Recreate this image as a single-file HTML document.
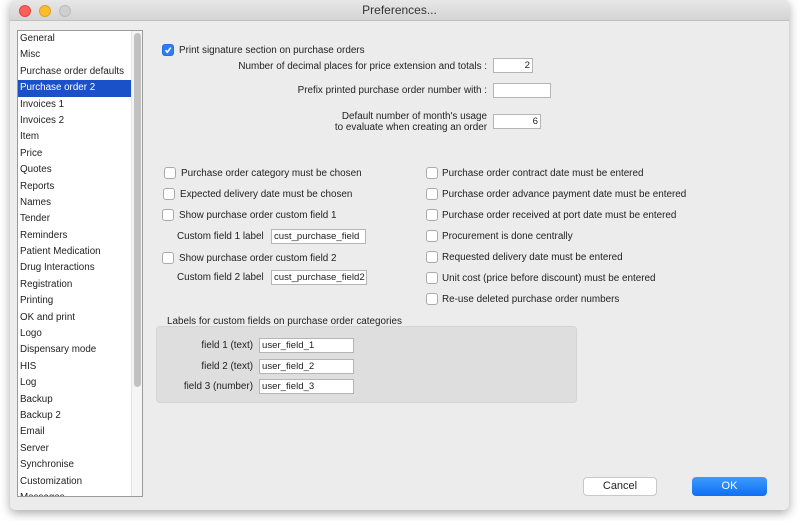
<!DOCTYPE html>
<html><head><meta charset="utf-8"><style>
*{margin:0;padding:0;box-sizing:border-box}
body{width:800px;height:521px;background:#fff;position:relative;overflow:hidden;font-family:"Liberation Sans",sans-serif;font-size:9.9px;color:#222}
.win{position:absolute;left:10px;top:0;width:779px;height:510px;background:#ececec;border-radius:5px;box-shadow:0 3px 10px rgba(0,0,0,.35);overflow:hidden}
.tb{position:absolute;left:0;top:0;width:100%;height:21px;background:linear-gradient(#e8e8e8,#d4d4d4);border-bottom:1px solid #c0c0c0;text-align:center;font-size:12px;line-height:21px;color:#333}
.dot{position:absolute;top:5px;width:12px;height:12px;border-radius:50%}
.a{position:absolute;white-space:nowrap}
.list{position:absolute;left:7px;top:30px;width:126px;height:467px;background:#fff;border:1px solid #9a9a9a;overflow:hidden}
.it{height:16.4px;line-height:16.4px;padding-left:2px;font-size:9.8px}
.sel{background:#1a50c8;color:#fff}
.sb{position:absolute;left:113px;top:0;width:12px;height:466px;background:#f5f5f5;border-left:1px solid #e4e4e4}
.th{position:absolute;left:2px;top:2px;width:7px;height:354px;background:#c1c1c1;border-radius:4px}
.cb{position:absolute;width:12px;height:12px;background:#fff;border:1px solid #aaa;border-radius:3px}
.in{position:absolute;background:#fff;border:1px solid #b5b5b5;height:15px;line-height:13px;padding:0 2px;font-size:9.6px;overflow:hidden;white-space:nowrap}
.r{text-align:right}
</style></head><body>
<div class="win">
<div class="tb">Preferences...</div>
<div class="dot" style="left:9px;background:#fc5f57;border:1px solid #e0443e"></div>
<div class="dot" style="left:29px;background:#fdbc2e;border:1px solid #dea123"></div>
<div class="dot" style="left:49px;background:#cfcfcf;border:1px solid #bbb"></div>
<div class="list">
<div class="it">General</div><div class="it">Misc</div><div class="it">Purchase order defaults</div><div class="it sel">Purchase order 2</div><div class="it">Invoices 1</div><div class="it">Invoices 2</div><div class="it">Item</div><div class="it">Price</div><div class="it">Quotes</div><div class="it">Reports</div><div class="it">Names</div><div class="it">Tender</div><div class="it">Reminders</div><div class="it">Patient Medication</div><div class="it">Drug Interactions</div><div class="it">Registration</div><div class="it">Printing</div><div class="it">OK and print</div><div class="it">Logo</div><div class="it">Dispensary mode</div><div class="it">HIS</div><div class="it">Log</div><div class="it">Backup</div><div class="it">Backup 2</div><div class="it">Email</div><div class="it">Server</div><div class="it">Synchronise</div><div class="it">Customization</div><div class="it">Messages</div>
<div class="sb"><div class="th"></div></div>
</div>

<div class="cb" style="left:152px;top:44px;background:#2f7cf6;border-color:#2a6fd8"><svg width="10" height="10" style="position:absolute;left:0;top:0"><path d="M2.5 5.2 L4.3 7.2 L7.8 2.6" stroke="#fff" stroke-width="1.6" fill="none"/></svg></div>
<div class="a" style="left:169px;top:45px">Print signature section on purchase orders</div>
<div class="a r" style="right:302px;top:61px">Number of decimal places for price extension and totals :</div>
<div class="in r" style="left:483px;top:58px;width:40px">2</div>
<div class="a r" style="right:302px;top:85px">Prefix printed purchase order number with :</div>
<div class="in" style="left:483px;top:83px;width:58px"></div>
<div class="a r" style="right:302px;top:111px;line-height:11px">Default number of month's usage<br>to evaluate when creating an order</div>
<div class="in r" style="left:483px;top:114px;width:48px">6</div>

<div class="cb" style="left:154px;top:167px"></div><div class="a" style="left:171px;top:168px">Purchase order category must be chosen</div>
<div class="cb" style="left:153px;top:188px"></div><div class="a" style="left:170px;top:189px">Expected delivery date must be chosen</div>
<div class="cb" style="left:152px;top:209px"></div><div class="a" style="left:169px;top:210px">Show purchase order custom field 1</div>
<div class="a" style="left:167px;top:231px">Custom field 1 label</div><div class="in" style="left:261px;top:229px;width:95px">cust_purchase_field</div>
<div class="cb" style="left:152px;top:252px"></div><div class="a" style="left:169px;top:253px">Show purchase order custom field 2</div>
<div class="a" style="left:167px;top:272px">Custom field 2 label</div><div class="in" style="left:261px;top:270px;width:96px">cust_purchase_field2</div>

<div class="cb" style="left:416px;top:167px"></div><div class="a" style="left:432px;top:168px">Purchase order contract date must be entered</div>
<div class="cb" style="left:416px;top:188px"></div><div class="a" style="left:432px;top:189px">Purchase order advance payment date must be entered</div>
<div class="cb" style="left:416px;top:209px"></div><div class="a" style="left:432px;top:210px">Purchase order received at port date must be entered</div>
<div class="cb" style="left:416px;top:230px"></div><div class="a" style="left:432px;top:231px">Procurement is done centrally</div>
<div class="cb" style="left:416px;top:251px"></div><div class="a" style="left:432px;top:252px">Requested delivery date must be entered</div>
<div class="cb" style="left:416px;top:272px"></div><div class="a" style="left:432px;top:273px">Unit cost (price before discount) must be entered</div>
<div class="cb" style="left:416px;top:293px"></div><div class="a" style="left:432px;top:294px">Re-use deleted purchase order numbers</div>

<div class="a" style="left:157px;top:316px">Labels for custom fields on purchase order categories</div>
<div class="a" style="left:146px;top:326px;width:421px;height:77px;background:#dedede;border:1px solid #d4d4d4;border-radius:4px"></div>
<div class="a r" style="right:536px;top:340px">field 1 (text)</div><div class="in" style="left:249px;top:338px;width:95px">user_field_1</div>
<div class="a r" style="right:536px;top:361px">field 2 (text)</div><div class="in" style="left:249px;top:359px;width:95px">user_field_2</div>
<div class="a r" style="right:536px;top:381px">field 3 (number)</div><div class="in" style="left:249px;top:379px;width:95px">user_field_3</div>

<div class="a" style="left:573px;top:477px;width:74px;height:19px;background:#fff;border:1px solid #c8c8c8;border-radius:4px;text-align:center;line-height:17px;font-size:11px">Cancel</div>
<div class="a" style="left:682px;top:477px;width:75px;height:19px;background:linear-gradient(#3d9cfd,#0f6ef5);border-radius:4px;text-align:center;line-height:19px;font-size:11px;color:#fff">OK</div>
</div>
</body></html>
